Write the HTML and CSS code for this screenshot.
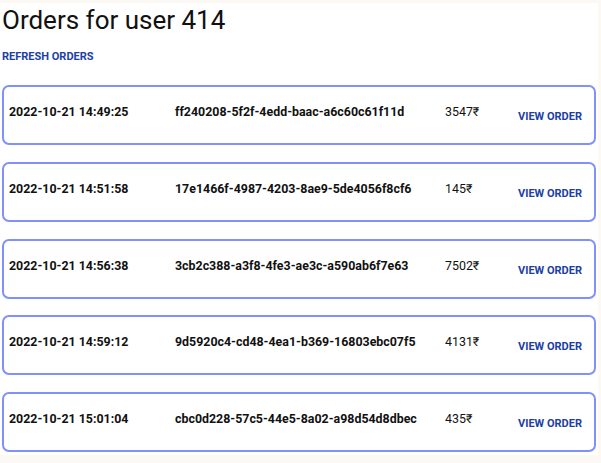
FILE: index.html
```html
<!DOCTYPE html>
<html>
<head>
<meta charset="utf-8">
<link rel="stylesheet" href="styles.css">
</head>
<body>
<div class="page">
  <h1 class="title">Orders for user 414</h1>
  <button class="link refresh">REFRESH ORDERS</button>
  <div class="list">
    <div class="card">
      <div class="cell date">2022-10-21 14:49:25</div>
      <div class="cell id">ff240208-5f2f-4edd-baac-a6c60c61f11d</div>
      <div class="cell price">3547₹</div>
      <button class="link view">VIEW ORDER</button>
    </div>
    <div class="card">
      <div class="cell date">2022-10-21 14:51:58</div>
      <div class="cell id">17e1466f-4987-4203-8ae9-5de4056f8cf6</div>
      <div class="cell price">145₹</div>
      <button class="link view">VIEW ORDER</button>
    </div>
    <div class="card">
      <div class="cell date">2022-10-21 14:56:38</div>
      <div class="cell id">3cb2c388-a3f8-4fe3-ae3c-a590ab6f7e63</div>
      <div class="cell price">7502₹</div>
      <button class="link view">VIEW ORDER</button>
    </div>
    <div class="card">
      <div class="cell date">2022-10-21 14:59:12</div>
      <div class="cell id">9d5920c4-cd48-4ea1-b369-16803ebc07f5</div>
      <div class="cell price">4131₹</div>
      <button class="link view">VIEW ORDER</button>
    </div>
    <div class="card">
      <div class="cell date">2022-10-21 15:01:04</div>
      <div class="cell id">cbc0d228-57c5-44e5-8a02-a98d54d8dbec</div>
      <div class="cell price">435₹</div>
      <button class="link view">VIEW ORDER</button>
    </div>
  </div>
</div>
</body>
</html>
```

FILE: styles.css
```css
html, body {
  margin: 0;
  padding: 0;
  background: #fcf9f4;
  font-family: Roboto, "Noto Sans", sans-serif;
  color: #111;
}
.page {
  background: #fff;
  margin: 3px 3px 0 0;
  height: 452px;
  padding: 0 0 0 2px;
  box-sizing: border-box;
}
.title {
  margin: 0;
  padding-top: 2px;
  font-size: 26px;
  font-weight: 400;
  line-height: 30px;
  letter-spacing: 0;
}
.link {
  background: none;
  border: 0;
  padding: 0;
  font-family: Roboto, "Noto Sans", sans-serif;
  font-weight: 700;
  font-size: 11px;
  color: #1b3ea6;
  text-transform: uppercase;
  cursor: pointer;
}
.refresh {
  display: block;
  margin-top: 15px;
  line-height: 13px;
}
.list {
  display: flex;
  flex-direction: column;
  gap: 16.75px;
  margin-top: 22px;
  margin-right: 2px;
}
.card {
  height: 60px;
  box-sizing: border-box;
  border: 2px solid #8191fc;
  border-radius: 7px;
  display: grid;
  grid-template-columns: 166px 270px 73px auto;
  align-items: start;
  padding: 17px 0 0 5px;
}
.cell {
  font-size: 12.4px;
  line-height: 16px;
}
.date, .id {
  font-weight: 700;
}
.price {
  font-weight: 400;
}
.view {
  text-align: left;
  margin-top: 6px;
  line-height: 14px;
}
```
